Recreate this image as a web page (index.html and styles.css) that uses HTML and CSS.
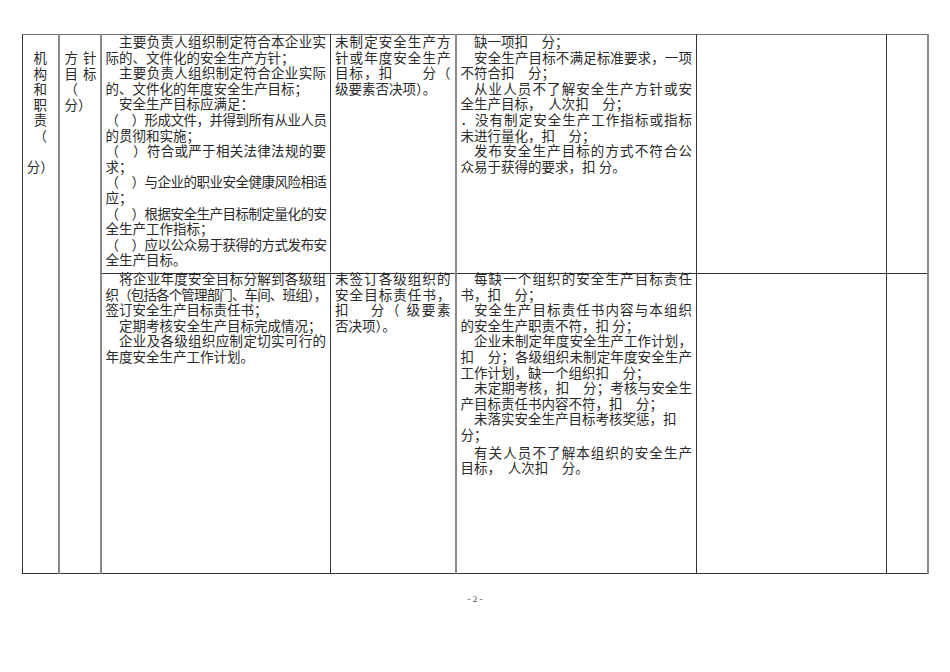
FILE: index.html
```html
<!DOCTYPE html>
<html lang="zh-CN">
<head>
<meta charset="utf-8">
<title>安全生产标准化</title>
<link rel="stylesheet" href="styles.css">
</head>
<body>
<div class="sheet">
  <table class="doc">
    <colgroup>
      <col class="w1"><col class="w2"><col class="w3"><col class="w4"><col class="w5"><col class="w6"><col class="w7">
    </colgroup>
    <tr class="r1">
      <td class="c1 lead" rowspan="2">
        <div class="ln">机</div>
        <div class="ln">构</div>
        <div class="ln">和</div>
        <div class="ln">职</div>
        <div class="ln">责</div>
        <div class="ln">（</div>
        <div class="ln">&nbsp;</div>
        <div class="ln">分）</div>
      </td>
      <td class="c2 lead" rowspan="2">
        <div class="ln j">方针</div>
        <div class="ln j">目标</div>
        <div class="ln">（</div>
        <div class="ln">分）</div>
      </td>
      <td class="c3">
        <div class="ln i j">主要负责人组织制定符合本企业实</div>
        <div class="ln">际的、文件化的安全生产方针；</div>
        <div class="ln i j">主要负责人组织制定符合企业实际</div>
        <div class="ln">的、文件化的年度安全生产目标；</div>
        <div class="ln i">安全生产目标应满足：</div>
        <div class="ln j s">（　）形成文件，并得到所有从业人员</div>
        <div class="ln">的贯彻和实施；</div>
        <div class="ln j">（　）符合或严于相关法律法规的要</div>
        <div class="ln">求；</div>
        <div class="ln j s">（　）与企业的职业安全健康风险相适</div>
        <div class="ln">应；</div>
        <div class="ln j s">（　）根据安全生产目标制定量化的安</div>
        <div class="ln">全生产工作指标；</div>
        <div class="ln j s">（　）应以公众易于获得的方式发布安</div>
        <div class="ln">全生产目标。</div>
      </td>
      <td class="c4">
        <div class="ln j">未制定安全生产方</div>
        <div class="ln j">针或年度安全生产</div>
        <div class="ln j">目标，扣　　分（</div>
        <div class="ln">级要素否决项）。</div>
      </td>
      <td class="c5">
        <div class="ln i">缺一项扣　分；</div>
        <div class="ln i j">安全生产目标不满足标准要求，一项</div>
        <div class="ln">不符合扣　分；</div>
        <div class="ln i j">从业人员不了解安全生产方针或安</div>
        <div class="ln">全生产目标，　人次扣　分；</div>
        <div class="ln j">．没有制定安全生产工作指标或指标</div>
        <div class="ln">未进行量化，扣　分；</div>
        <div class="ln i j">发布安全生产目标的方式不符合公</div>
        <div class="ln">众易于获得的要求，扣 分。</div>
      </td>
      <td class="c6"></td>
      <td class="c7"></td>
    </tr>
    <tr class="r2">
      <td class="c3">
        <div class="ln i j">将企业年度安全目标分解到各级组</div>
        <div class="ln j t">织（包括各个管理部门、车间、班组），</div>
        <div class="ln">签订安全生产目标责任书；</div>
        <div class="ln i">定期考核安全生产目标完成情况；</div>
        <div class="ln i j">企业及各级组织应制定切实可行的</div>
        <div class="ln">年度安全生产工作计划。</div>
      </td>
      <td class="c4">
        <div class="ln j">未签订各级组织的</div>
        <div class="ln j">安全目标责任书，</div>
        <div class="ln j">扣 　分（ 级要素</div>
        <div class="ln">否决项）。</div>
      </td>
      <td class="c5">
        <div class="ln i j">每缺一个组织的安全生产目标责任</div>
        <div class="ln">书，扣　分；</div>
        <div class="ln i j">安全生产目标责任书内容与本组织</div>
        <div class="ln">的安全生产职责不符，扣 分；</div>
        <div class="ln i j">企业未制定年度安全生产工作计划，</div>
        <div class="ln j">扣　分；各级组织未制定年度安全生产</div>
        <div class="ln">工作计划，缺一个组织扣　分；</div>
        <div class="ln i j">未定期考核，扣　分；考核与安全生</div>
        <div class="ln">产目标责任书内容不符，扣　分；</div>
        <div class="ln i">未落实安全生产目标考核奖惩，扣</div>
        <div class="ln">分；</div>
        <div class="ln i j gap">有关人员不了解本组织的安全生产</div>
        <div class="ln">目标，　人次扣　分。</div>
      </td>
      <td class="c6"></td>
      <td class="c7"></td>
    </tr>
  </table>
  <div class="pageno">- 2 -</div>
</div>
</body>
</html>
```

FILE: styles.css
```css
html, body {
  margin: 0;
  padding: 0;
  background: #ffffff;
}

body {
  font-family: "Liberation Serif", "Noto Sans CJK SC", "Noto Sans CJK JP", serif;
  color: #2a2a2a;
}

.sheet {
  padding-top: 34px;
}

.doc {
  margin-left: 22px;
  width: 905px;
  border-collapse: collapse;
  table-layout: fixed;
}

.w1 { width: 36px; }
.w2 { width: 42px; }
.w3 { width: 230px; }
.w4 { width: 125px; }
.w5 { width: 241px; }
.w6 { width: 190px; }
.w7 { width: 41px; }

.r1 { height: 239px; }
.r2 { height: 300px; }

.doc td {
  border: 1px solid #333333;
  vertical-align: top;
  padding: 0 4px;
  font-size: 13.5px;
  line-height: 15.6px;
  font-weight: 400;
}

.r1 td {
  border-top: 1px solid #6e6e6e;
}

.r2 td .ln:first-child {
  margin-top: -2px;
}

.doc td.c2,
.doc td.c3,
.doc td.c5 {
  border-left: 2px solid #8a8a8a;
}

.doc td.c7 {
  border-right: 2px solid #8a8a8a;
}

.doc td.lead {
  padding-top: 16px;
}

.doc td.c1 {
  text-align: center;
  padding-left: 2px;
  padding-right: 2px;
}

.doc td.c2 {
  padding-left: 5px;
  padding-right: 3px;
}

.ln {
  white-space: nowrap;
}

.i {
  text-indent: 1em;
}

.j {
  text-align: justify;
  text-align-last: justify;
}

.s {
  letter-spacing: -0.5px;
}

.t {
  letter-spacing: -1.2px;
}

.gap {
  margin-top: 2px;
}

.pageno {
  margin-top: 19px;
  text-align: center;
  font-family: "Liberation Serif", serif;
  font-size: 9px;
  line-height: 12px;
  color: #444444;
}
```
